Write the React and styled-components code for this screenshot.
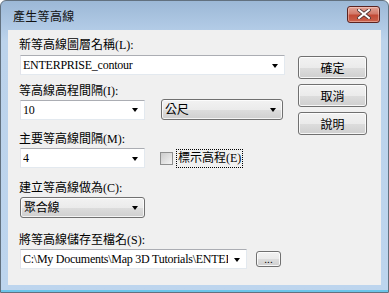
import React from 'react';
import styled, { createGlobalStyle } from 'styled-components';

const GlobalStyle = createGlobalStyle`
  html, body {
    margin: 0;
    padding: 0;
    background: #ffffff;
  }
  body {
    font-family: "Liberation Serif", "Noto Sans CJK TC", serif;
    font-size: 12px;
    color: #000;
  }
`;

const Window = styled.div`
  box-sizing: border-box;
  width: 389px;
  height: 293px;
  display: flex;
  flex-direction: column;
  border: 1px solid #62717f;
  border-radius: 6px 6px 0 0;
  background: linear-gradient(to bottom, #9cb8d6 0px, #b2cbe6 28px, #bcd3eb 40px, #bdd5ee 100%);
  box-shadow: inset 0 -2px 0 #6cc4e8;
`;

const TitleBar = styled.div`
  height: 29px;
  display: flex;
  align-items: center;
  padding-left: 12px;
  flex: none;
`;

const Title = styled.div`
  font-family: "Noto Sans CJK TC", sans-serif;
  font-size: 12px;
  color: #111;
  letter-spacing: 0.3px;
  margin-top: -1px;
`;

const CloseButton = styled.div`
  margin-left: auto;
  margin-right: 8px;
  margin-top: -3px;
  box-sizing: border-box;
  width: 33px;
  height: 17px;
  border: 1px solid #5a2320;
  border-radius: 3px;
  background: linear-gradient(to bottom, #e2a497 0%, #d27a6a 45%, #c24a36 55%, #c9624c 100%);
  box-shadow: inset 0 0 0 1px rgba(255, 220, 210, 0.45);
  display: flex;
  align-items: center;
  justify-content: center;
`;

const Client = styled.div`
  flex: 1;
  margin: 0 7px 7px 7px;
  background: #f0f0f0;
  display: grid;
  grid-template-columns: 266px 69px;
  column-gap: 13px;
  align-items: start;
  padding: 8px 0 0 11px;
`;

const FormColumn = styled.div`
  display: flex;
  flex-direction: column;
`;

const Group = styled.div`
  display: flex;
  flex-direction: column;
  margin-top: ${({ $mt }) => $mt || 0}px;
`;

const Label = styled.div`
  height: 14px;
  line-height: 14px;
  margin-bottom: ${({ $mb }) => ($mb === undefined ? 2 : $mb)}px;
  white-space: nowrap;
`;

const Row = styled.div`
  display: flex;
  align-items: center;
  padding-left: 1px;
  gap: ${({ $gap }) => $gap || 0}px;
`;

const Combo = styled.div`
  box-sizing: border-box;
  width: ${({ $w }) => $w}px;
  height: 20px;
  background: #fff;
  border: 1px solid;
  border-color: #abadb3 #e3e9ef #e3e9ef #e2e3ea;
  display: flex;
  align-items: center;
  padding-left: 2px;
  overflow: hidden;
`;

const ComboText = styled.span`
  flex: 1;
  min-width: 0;
  white-space: nowrap;
  overflow: hidden;
  line-height: 18px;
  letter-spacing: -0.25px;
`;

const Arrow = styled.span`
  flex: none;
  width: 0;
  height: 0;
  border-left: 3.5px solid transparent;
  border-right: 3.5px solid transparent;
  border-top: 4px solid #000;
  margin: 1px 6px 0 6px;
`;

const DropList = styled.div`
  box-sizing: border-box;
  width: ${({ $w }) => $w}px;
  height: 21px;
  border: 1px solid #707070;
  border-radius: 3px;
  background: linear-gradient(to bottom, #f2f2f2 0%, #ebebeb 50%, #dddddd 51%, #cfcfcf 100%);
  box-shadow: inset 0 0 0 1px rgba(255, 255, 255, 0.75);
  display: flex;
  align-items: center;
  padding-left: 3px;
`;

const CheckLine = styled.div`
  display: flex;
  align-items: center;
  margin-left: 15px;
`;

const CheckBox = styled.span`
  box-sizing: border-box;
  width: 13px;
  height: 13px;
  border: 1px solid #8e8f8f;
  background: linear-gradient(135deg, #cbcbcb 0%, #f4f4f4 100%);
`;

const FocusLabel = styled.span`
  margin-left: 3px;
  padding: 1px 1px;
  border: 1px dotted #000;
  line-height: 15px;
`;

const SideColumn = styled.div`
  display: flex;
  flex-direction: column;
  gap: 5px;
  margin-top: 18px;
`;

const Button = styled.div`
  box-sizing: border-box;
  width: ${({ $w }) => $w || 69}px;
  height: ${({ $h }) => $h || 23}px;
  border: 1px solid #707070;
  border-radius: 3px;
  background: linear-gradient(to bottom, #f2f2f2 0%, #ebebeb 50%, #dddddd 51%, #cfcfcf 100%);
  box-shadow: inset 0 0 0 1px rgba(255, 255, 255, 0.8);
  display: flex;
  align-items: center;
  justify-content: center;
  font-family: "Noto Sans CJK TC", sans-serif;
  font-size: ${({ $fs }) => $fs || 12}px;
  line-height: 1;
  flex: none;
`;

export default function App() {
  return (
    <>
      <GlobalStyle />
      <Window>
        <TitleBar>
          <Title>產生等高線</Title>
          <CloseButton>
            <svg width="14" height="10" viewBox="0 0 14 10">
              <path
                d="M2 1 L12 9 M12 1 L2 9"
                stroke="#4a3030"
                strokeWidth="3.6"
                strokeLinecap="square"
              />
              <path
                d="M2 1 L12 9 M12 1 L2 9"
                stroke="#ffffff"
                strokeWidth="2"
                strokeLinecap="square"
              />
            </svg>
          </CloseButton>
        </TitleBar>
        <Client>
          <FormColumn>
            <Group>
              <Label $mb={3}>新等高線圖層名稱(L):</Label>
              <Row>
                <Combo $w={265}>
                  <ComboText>ENTERPRISE_contour</ComboText>
                  <Arrow />
                </Combo>
              </Row>
            </Group>
            <Group $mt={9}>
              <Label $mb={1}>等高線高程間隔(I):</Label>
              <Row $gap={16}>
                <Combo $w={125}>
                  <ComboText>10</ComboText>
                  <Arrow />
                </Combo>
                <DropList $w={122}>
                  <ComboText>公尺</ComboText>
                  <Arrow />
                </DropList>
              </Row>
            </Group>
            <Group $mt={12}>
              <Label>主要等高線間隔(M):</Label>
              <Row>
                <Combo $w={125}>
                  <ComboText>4</ComboText>
                  <Arrow />
                </Combo>
                <CheckLine>
                  <CheckBox />
                  <FocusLabel>標示高程(E)</FocusLabel>
                </CheckLine>
              </Row>
            </Group>
            <Group $mt={13}>
              <Label>建立等高線做為(C):</Label>
              <Row>
                <DropList $w={125}>
                  <ComboText>聚合線</ComboText>
                  <Arrow />
                </DropList>
              </Row>
            </Group>
            <Group $mt={15}>
              <Label>將等高線儲存至檔名(S):</Label>
              <Row $gap={9}>
                <Combo $w={227}>
                  <ComboText>C:\My Documents\Map 3D Tutorials\ENTER</ComboText>
                  <Arrow />
                </Combo>
                <Button $w={25} $h={16} $fs={10}>...</Button>
              </Row>
            </Group>
          </FormColumn>
          <SideColumn>
            <Button>確定</Button>
            <Button>取消</Button>
            <Button>說明</Button>
          </SideColumn>
        </Client>
      </Window>
    </>
  );
}
